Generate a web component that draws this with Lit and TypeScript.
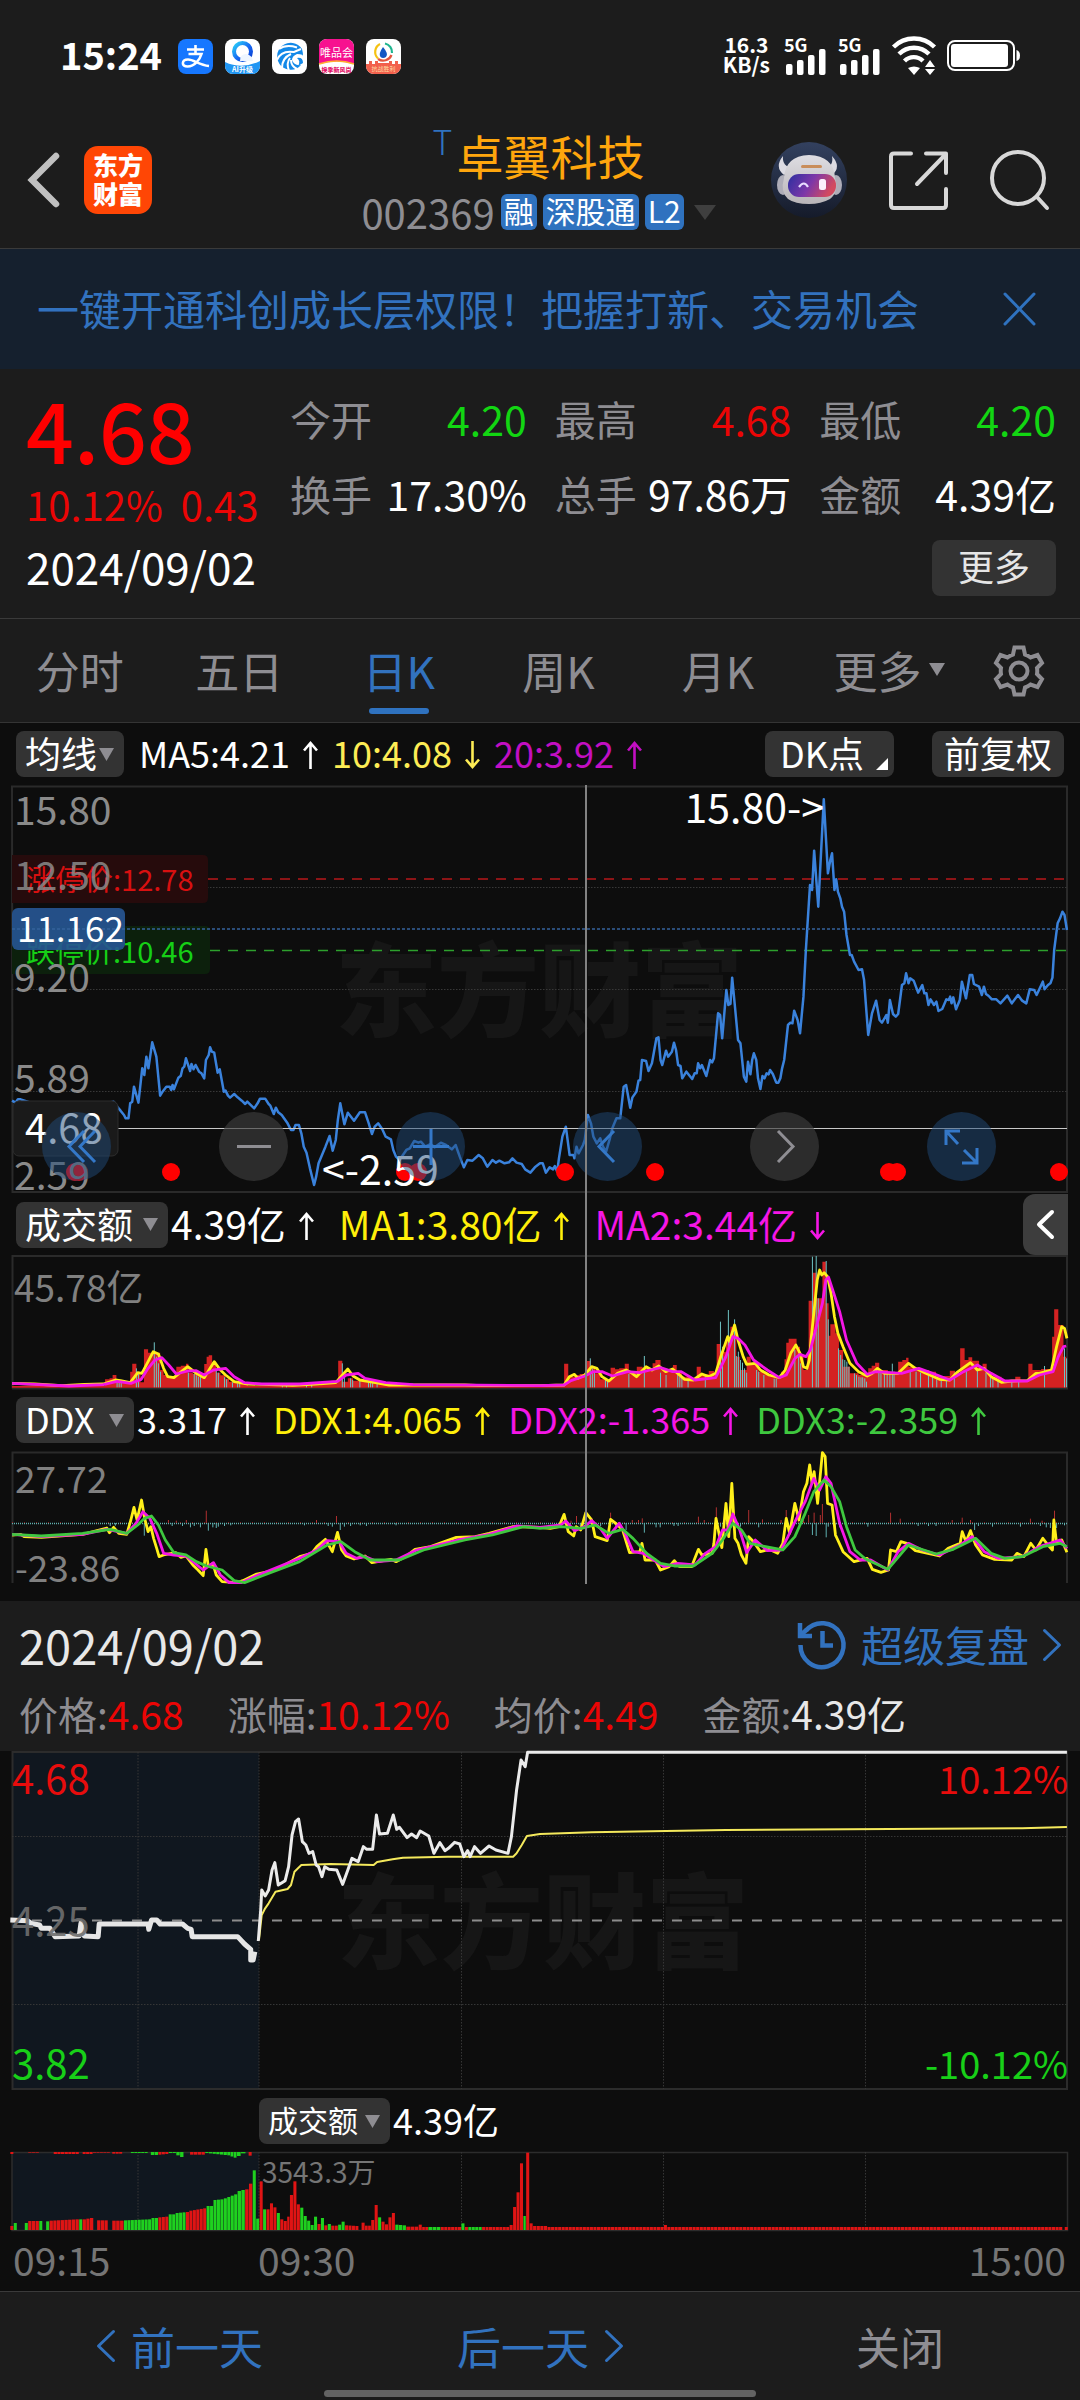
import { LitElement, html, css, svg, nothing } from "lit";
import { customElement, state } from "lit/decorators.js";

type Dir = "up" | "down" | "";
interface Reading { text: string; dir: Dir; tone: string; }
/** A run of equal-width bars: start, end, first top, last top, tone. */
type Run = [number, number, number, number, string];

/* Chart traces are sampled on a fine grid; the right half is stored relative to its own origin. */
const HALF = 1568;
const FINE = "scale(0.34439 0.33333)";

function pts(left: string, right = ""): string {
  const shift = right
    .split(" ")
    .filter(Boolean)
    .map((p) => {
      const [x, y] = p.split(",").map(Number);
      return `${x + HALF},${y}`;
    });
  return [left, ...shift].join(" ");
}

const PRICE = pts(
  "35,1172 45,1178 52,1168 60,1168 100,1182 160,1190 220,1178 280,1186 330,1175 340,1190 350,1202 360,1215 365,1225 373,1225 378,1180 384,1175 389,1130 402,1178 413,1075 419,1095 425,1040 431,1075 442,997 454,1040 465,1157 472,1145 483,1130 493,1130 497,1140 501,1125 505,1138 518,1103 525,1097 530,1075 535,1070 540,1045 552,1083 556,1062 562,1078 568,1065 578,1085 585,1090 593,1105 598,1050 606,1035 610,1012 615,1025 622,1028 632,1088 638,1078 650,1145 655,1142 662,1157 668,1163 680,1152 690,1162 702,1172 712,1182 718,1175 738,1195 748,1180 755,1166 770,1166 780,1182 785,1187 795,1212 801,1193 808,1207 818,1215 835,1240 845,1260 852,1260 858,1245 868,1245 875,1270 882,1310 890,1328 900,1375 912,1425 918,1400 925,1360 935,1335 945,1310 957,1278 966,1322 975,1290 981,1230 988,1180 1000,1243 1010,1208 1028,1232 1045,1207 1060,1207 1070,1238 1080,1272 1088,1250 1098,1240 1110,1258 1120,1280 1135,1288 1142,1320 1150,1340 1160,1350 1180,1320 1190,1315 1203,1293 1215,1298 1222,1295 1235,1310 1250,1302 1262,1312 1280,1298 1295,1305 1312,1318 1323,1305 1335,1340 1347,1372 1357,1350 1372,1352 1390,1335 1402,1345 1415,1370 1430,1350 1440,1358 1450,1352 1465,1360 1478,1357 1488,1345 1500,1358 1515,1362 1525,1378 1540,1388 1553,1372",
  "0,1360 8,1360 17,1388 28,1372 38,1378 43,1368 50,1385 55,1345 65,1280 75,1250 86,1335 97,1335 100,1345 106,1310 112,1330 125,1305 130,1290 139,1215 148,1240 155,1280 165,1300 175,1285 183,1310 192,1325 203,1285 210,1255 222,1225 233,1225 243,1130 250,1125 262,1193 268,1163 280,1145 286,1112 291,1110 296,1050 308,1053 315,1083 325,1060 338,985 344,982 350,1050 355,1065 366,1022 372,1040 383,1025 389,998 395,1020 401,1065 408,1068 413,1105 425,1085 442,1107 449,1090 455,1090 459,1060 465,1075 470,1065 483,1098 494,1050 500,1057 505,1045 517,910 523,915 529,985 541,840 547,885 553,882 558,803 567,900 575,990 582,1000 592,1100 599,1115 604,1055 611,1093 616,1050 621,1030 628,1050 633,1105 640,1137 646,1098 652,1105 658,1090 664,1093 668,1080 676,1092 686,1118 692,1118 698,1105 703,1075 709,1050 720,945 727,938 733,940 738,902 748,930 755,970 765,860 772,720 784,525 790,540 796,422 808,590 824,268 836,490 843,450 848,430 855,540 860,508 865,545 872,565 877,590 883,605 890,675 900,735 905,735 912,755 925,780 935,778 941,810 946,880 953,975 964,910 976,872 986,930 993,938 1006,915 1010,938 1016,870 1025,912 1033,920 1040,912 1051,825 1058,820 1063,790 1070,820 1075,805 1085,812 1098,848 1110,825 1116,850 1122,850 1128,885 1134,868 1144,885 1151,875 1157,903 1168,897 1180,868 1187,870 1191,860 1195,880 1200,862 1208,898 1219,870 1225,815 1237,865 1248,795 1255,795 1260,822 1275,830 1283,855 1289,830 1295,852 1303,858 1312,868 1325,868 1337,880 1357,857 1370,880 1388,855 1400,872 1412,880 1422,838 1435,840 1442,855 1460,815 1465,838 1475,825 1482,820 1488,803 1493,720 1498,680 1503,640 1510,625 1517,605 1523,615 1530,660",
);

const TURN_FAST = pts(
  "35,580 100,582 180,587 245,583 300,582 335,570 350,572 378,578 400,548 412,550 430,515 445,485 460,492 475,535 487,560 505,563 520,550 545,530 570,550 593,563 610,535 622,515 640,540 655,555 680,575 720,582 850,586 920,582 975,578 990,560 1010,537 1025,558 1045,570 1090,578 1130,585 1350,585 1400,587",
  "0,587 70,585 85,560 100,553 110,565 130,555 150,530 165,535 180,560 200,573 225,550 250,540 265,548 280,560 308,530 325,540 345,528 365,545 385,537 400,550 420,568 445,570 470,552 490,560 510,550 525,500 545,440 550,455 565,405 575,450 590,500 600,523 625,520 640,540 665,555 695,563 712,540 728,490 743,465 755,490 765,530 775,535 782,510 788,440 798,340 805,270 812,240 818,255 825,248 835,260 845,310 855,380 865,430 880,470 900,520 925,545 950,558 965,550 980,535 1000,550 1040,550 1070,520 1090,535 1120,550 1160,568 1190,570 1210,548 1250,518 1270,540 1290,535 1310,560 1340,577 1370,573 1415,572 1440,550 1450,550 1485,540 1500,470 1515,410 1523,415 1530,445",
);
const TURN_SLOW = pts(
  "35,580 100,583 200,588 300,584 340,574 380,580 410,568 430,535 450,510 470,503 490,525 512,552 545,543 570,542 593,555 620,540 655,535 680,560 710,578 760,582 870,582 980,574 1005,555 1040,550 1060,565 1120,578 1200,584",
  "0,587 70,585 90,572 130,558 155,545 180,545 210,558 255,545 290,548 320,540 350,533 385,545 410,545 450,570 510,563 540,500 560,440 575,445 595,465 620,510 660,540 695,563 715,555 740,505 755,493 772,500 785,480 800,420 820,340 830,270 838,262 850,300 870,365 890,450 920,520 950,553 975,545 1050,550 1100,535 1140,550 1190,570 1230,545 1270,525 1310,550 1350,573 1415,573 1450,555 1490,545 1505,500 1520,470 1528,468",
);
const TURN_BARS = pts(
  "35,588 305,568 318,565 327,555 338,572 350,575 362,578 378,545 384,521 396,548 408,577 418,478 430,488 445,488 465,540 475,555 490,560 512,530 525,527 540,521 547,548 560,552 575,558 593,522 600,500 606,496 616,517 628,548 640,556 655,566 665,575 690,582 720,587 900,586 930,577 940,575 960,572 982,512 994,575 1010,565 1025,572 1040,570 1060,573 1100,582 1150,588",
  "70,521 82,560 100,555 115,552 130,550 134,513 147,535 160,550 175,568 205,533 218,538 230,535 246,521 258,548 270,545 281,530 298,535 327,520 335,510 350,538 370,540 386,525 397,545 412,560 440,570 455,530 467,553 490,543 505,548 513,462 524,485 540,450 553,410 562,430 570,500 580,540 600,500 612,518 635,545 660,555 690,562 700,545 710,508 715,458 722,446 745,470 755,500 765,540 775,488 780,332 792,248 803,325 820,215 830,340 838,437 843,403 858,430 868,480 880,530 900,550 925,555 953,535 963,527 973,518 985,540 1010,550 1040,515 1052,510 1063,503 1070,530 1090,540 1130,545 1150,558 1190,542 1205,550 1220,475 1233,510 1244,502 1255,512 1275,530 1285,521 1297,545 1310,560 1340,572 1380,560 1395,570 1418,521 1430,540 1455,537 1487,440 1493,358 1505,405 1520,500 1528,592",
);
const TURN_FALLS = pts(
  "340,572 346,575 352,578 396,535 402,550 448,457 454,500 460,520 466,545 547,548 564,552 570,556 576,560 582,556 628,540 634,548 652,562 658,568 675,577 690,580 696,580 820,586 832,586 890,584 905,584 994,520 1000,555 1018,565 1024,570 1045,572 1070,574 1076,574 1082,578 1095,580",
  "146,505 152,535 158,545 190,570 196,572 258,552 303,498 350,548 366,555 400,555 406,560 412,562 430,570 480,560 524,395 530,470 547,360 565,388 570,498 576,485 582,510 588,518 594,535 600,548 629,540 635,545 650,555 680,566 686,566 740,480 751,500 757,520 791,200 802,198 808,325 831,213 837,388 867,475 873,495 879,508 885,510 891,515 897,530 913,550 919,555 926,560 932,562 937,562 943,565 948,575 984,545 990,548 1000,552 1008,552 1016,552 1023,521 1028,545 1075,540 1092,545 1105,548 1128,555 1140,560 1152,568 1165,568 1180,570 1203,548 1238,540 1270,535 1295,548 1308,560 1315,565 1330,572 1370,572 1390,572 1465,528 1523,475 1529,505",
);

const DDX_FAST = pts(
  "35,1035 60,1033 70,1040 120,1042 200,1036 240,1033 310,1014 318,1028 330,1012 345,1030 368,1033 380,990 389,952 398,990 411,930 420,985 430,1025 438,1010 446,1045 455,1075 462,1100 475,1095 510,1088 525,1102 540,1098 560,1125 575,1140 590,1157 598,1078 605,1130 618,1120 628,1155 645,1175 690,1178 705,1172 745,1152 800,1140 870,1100 905,1090 920,1070 945,1048 965,1085 980,1027 992,1080 1005,1098 1028,1107 1060,1098 1080,1118 1135,1108 1150,1115 1180,1098 1205,1078 1250,1070 1325,1042 1380,1040 1420,1030 1490,1010",
  "0,1012 30,1015 55,1010 70,973 82,1025 98,1038 105,1010 118,1020 133,968 150,990 160,1040 195,1052 205,988 220,1000 240,1020 260,1088 290,1085 296,1060 305,1110 335,1110 350,1140 375,1130 390,1112 405,1130 440,1130 460,1078 470,1095 500,1090 505,1060 511,985 528,1073 540,940 548,1040 557,880 566,1045 575,1060 585,1095 598,1120 606,1040 620,1055 640,1085 665,1078 690,1090 705,1060 715,985 725,1030 740,940 752,990 765,905 775,880 783,825 790,880 796,845 806,940 820,788 828,800 835,940 848,945 858,1035 880,1085 912,1115 950,1105 965,1138 990,1147 1012,1140 1018,1080 1035,1085 1048,1055 1065,1060 1090,1082 1160,1098 1185,1075 1220,1060 1226,1025 1237,1055 1250,1022 1265,1065 1285,1095 1320,1108 1370,1110 1385,1090 1405,1100 1425,1060 1440,1080 1460,1045 1475,1065 1488,1080 1492,990 1500,1060 1515,1050 1530,1087",
);
const DDX_MID = pts(
  "35,1033 120,1040 240,1033 310,1018 368,1030 395,1000 415,965 435,985 455,1030 475,1090 505,1095 540,1098 590,1140 620,1118 640,1155 665,1178 700,1178 750,1155 870,1105 920,1080 950,1052 985,1055 1005,1090 1035,1105 1060,1100 1095,1115 1150,1110 1210,1080 1330,1050 1420,1033 1500,1008",
  "0,1012 60,1005 75,993 100,1022 130,1010 150,992 175,1015 195,1045 230,1000 245,1025 270,1085 300,1090 330,1110 360,1130 400,1120 450,1125 480,1090 510,1070 530,1020 545,1020 560,972 580,1020 600,1088 625,1050 660,1082 700,1080 720,1040 745,985 770,935 795,865 812,900 830,860 845,880 870,1000 900,1085 930,1110 960,1110 1010,1140 1040,1085 1070,1060 1110,1080 1160,1095 1220,1065 1255,1040 1290,1085 1330,1105 1400,1100 1450,1070 1510,1050 1530,1075",
);
const DDX_SLOW = pts(
  "35,1033 120,1038 240,1030 320,1018 368,1030 400,1005 420,985 440,978 460,1005 480,1050 505,1088 540,1095 570,1115 600,1128 645,1140 680,1172 710,1178 760,1158 870,1115 950,1065 990,1055 1030,1085 1075,1110 1160,1110 1230,1080 1350,1050 1430,1035 1520,1010",
  "0,1015 60,1010 120,1015 160,1005 200,1030 240,1018 270,1045 310,1090 350,1120 390,1128 445,1128 500,1090 530,1050 560,1000 585,1020 610,1060 655,1070 705,1080 740,1040 770,970 795,905 825,870 845,890 870,935 890,1010 915,1080 945,1107 1010,1138 1070,1065 1150,1092 1200,1078 1265,1045 1310,1090 1350,1105 1400,1100 1460,1070 1510,1060 1530,1070",
);
const DDX_TICKS = pts(
  "320,1008 335,1007 419,1037 489,990 500,1008 512,992 530,1008 541,990 553,1012 564,1008 582,1012 599,962 605,1022 618,1012 628,1014 634,1010 652,1008 670,1006 884,1006 919,990 953,1008 965,1010 977,978 988,1020 1000,1010 1018,1008 1046,1006 1064,1008 1150,1006",
  "90,992 106,978 117,1008 176,1008 205,968 220,1012 250,1020 268,990 286,990 297,985 303,1028 337,1012 349,1012 389,1008 401,1008 460,980 477,990 512,952 524,1010 547,1040 560,984 582,1010 606,960 635,1012 646,988 700,990 715,960 733,1012 750,985 765,990 780,975 791,1035 796,968 802,1038 814,975 820,942 831,1042 837,1010 857,1040 870,1012 952,1010 1018,968 1046,986 1098,1008 1128,1008 1150,1008 1197,990 1226,983 1250,990 1262,1020 1273,1008 1314,1010 1395,1010 1424,986 1453,1008 1458,992 1470,1012 1482,1014 1494,962 1500,1014 1523,1006",
);

const PRE_OPEN =
  "30,990 80,992 90,1000 115,1005 120,1015 145,1015 160,1040 230,1038 235,1000 245,1038 285,1040 288,1002 430,1002 432,1018 440,990 455,990 465,1002 530,1002 545,1015 555,1018 558,1040 690,1040 710,1062 728,1078 728,1110 735,1110 740,1085";
const INTRADAY = pts(
  "750,1053 757,960 760,900 770,918 780,900 790,840 798,818 808,885 828,872 838,830 848,735 858,695 867,687 878,755 888,765 897,790 908,785 918,825 925,830 935,860 943,830 955,838 978,840 995,883 1010,840 1022,805 1040,815 1055,770 1065,778 1082,778 1093,675 1102,732 1125,730 1142,675 1152,718 1160,712 1182,743 1195,732 1210,743 1220,723 1245,738 1260,790 1277,758 1292,782 1302,775 1320,757 1335,762 1347,800 1358,782 1365,800 1378,770 1395,790 1420,768 1440,780 1475,790 1485,740 1500,600 1513,510 1525,530 1532,487",
  "0,487 1530,487",
);
const AVERAGE = pts(
  "752,1050 760,975 770,955 780,940 800,905 835,897 845,885 855,845 875,825 960,822 1085,825 1095,816 1140,808 1170,803 1300,800 1490,800 1500,790 1515,765 1530,738",
  "0,732 150,727 540,720 1400,715 1530,711",
);

const R = "#e01414";
const G = "#1fd11f";
const VOLUME: Run[] = [
  [15, 20, 438, 438, R], [20, 25, 429, 429, G], [36, 41, 429, 429, G], [41, 57, 423, 423, R], [57, 62, 423, 423, G],
  [67, 72, 424, 424, G], [72, 115, 422, 418, R], [115, 120, 418, 418, G], [120, 136, 418, 414, R], [141, 157, 421, 421, R],
  [163, 180, 422, 422, R], [180, 220, 421, 418, G], [220, 230, 414, 414, G], [230, 245, 412, 410, R], [245, 255, 403, 403, G],
  [255, 270, 399, 397, G], [270, 275, 396, 396, R], [275, 300, 392, 385, R], [300, 310, 378, 378, G], [310, 325, 360, 358, G],
  [325, 345, 355, 343, G], [345, 356, 333, 330, G], [356, 367, 328, 311, R], [367, 372, 271, 271, G], [372, 377, 416, 416, G],
  [377, 382, 304, 304, R], [382, 387, 388, 388, G], [387, 392, 388, 388, R], [392, 397, 370, 370, R], [397, 402, 382, 382, R],
  [402, 407, 399, 399, G], [407, 412, 418, 418, R], [412, 417, 423, 423, R], [417, 421, 410, 410, R], [421, 426, 345, 345, R],
  [426, 431, 304, 304, R], [431, 436, 373, 373, R], [436, 441, 383, 383, G], [441, 446, 408, 408, G], [446, 451, 422, 422, G],
  [451, 456, 435, 435, G], [456, 461, 410, 410, G], [461, 466, 432, 432, R], [466, 471, 414, 414, G], [471, 476, 436, 436, R],
  [476, 481, 432, 432, G], [481, 491, 437, 437, R], [491, 496, 434, 434, G], [496, 501, 425, 425, G], [501, 521, 436, 438, R],
  [525, 530, 428, 428, R], [530, 539, 437, 437, R], [539, 544, 420, 420, R], [544, 549, 375, 375, R], [549, 554, 412, 412, G],
  [554, 559, 425, 425, R], [559, 564, 433, 433, R], [564, 569, 412, 412, R], [569, 574, 399, 399, R], [574, 590, 434, 436, G],
  [590, 608, 440, 440, R], [608, 613, 434, 434, R], [613, 622, 441, 441, R], [622, 640, 441, 441, G], [640, 670, 441, 441, R],
  [670, 675, 430, 430, G], [675, 680, 441, 441, R], [680, 700, 441, 441, G], [700, 740, 441, 441, R], [740, 745, 435, 435, R],
  [745, 750, 381, 381, R], [750, 755, 337, 337, R], [755, 760, 250, 250, R], [760, 764, 408, 408, G], [764, 769, 218, 218, R],
  [769, 774, 430, 430, R], [774, 795, 438, 438, R], [795, 964, 441, 441, R], [964, 969, 435, 435, R], [969, 1543, 441, 441, R],
  [1546, 1551, 441, 441, R],
];
const UNMATCHED: Run[] = [
  [15, 20, 222, 222, R], [41, 57, 218, 218, R], [78, 115, 222, 222, R], [120, 135, 222, 222, R], [135, 160, 218, 218, R],
  [163, 178, 221, 221, R], [190, 215, 219, 219, G], [219, 230, 225, 225, G], [230, 245, 224, 222, R], [245, 256, 219, 219, G],
  [256, 267, 226, 231, G], [276, 298, 224, 224, R], [298, 330, 219, 225, G], [330, 344, 226, 233, G], [344, 350, 228, 228, G],
  [350, 357, 220, 220, G], [361, 366, 227, 227, R],
];

function runs(list: Run[], base: number, hanging = false) {
  return list.map(([from, to, first, last, tone]) => {
    const count = Math.max(1, Math.round((to - from) / 5.2));
    const step = (to - from) / count;
    return Array.from({ length: count }, (_, i) => {
      const top = count > 1 ? first + ((last - first) * i) / (count - 1) : first;
      return svg`<rect x=${from + i * step} y=${hanging ? base : top} width=${step - 0.6} height=${Math.abs(base - top)} fill=${tone}></rect>`;
    });
  });
}

function pairs(trace: string): number[][] {
  return trace.split(" ").map((p) => p.split(",").map(Number));
}

/** Turns step samples into one closed area that stands on the base line. */
function steps(trace: string, base: number): string {
  const list = pairs(trace);
  let d = `M${list[0][0]} ${base}`;
  list.forEach(([x, y], i) => {
    const next = list[i + 1] ? list[i + 1][0] : x;
    d += `V${y}H${next}`;
  });
  return `${d}V${base}Z`;
}

function stems(trace: string, base: number): string {
  return pairs(trace).map(([x, y]) => `M${x} ${base}V${y}`).join("");
}

const STATS = [
  { label: "今开", value: "4.20", tone: "green" },
  { label: "最高", value: "4.68", tone: "red" },
  { label: "最低", value: "4.20", tone: "green" },
  { label: "换手", value: "17.30%", tone: "white" },
  { label: "总手", value: "97.86万", tone: "white" },
  { label: "金额", value: "4.39亿", tone: "white" },
];
const TABS = ["分时", "五日", "日K", "周K", "月K"];
const MA: Reading[] = [
  { text: "MA5:4.21", dir: "up", tone: "white" },
  { text: "10:4.08", dir: "down", tone: "lemon" },
  { text: "20:3.92", dir: "up", tone: "purple" },
];
const TURNOVER: Reading[] = [
  { text: "4.39亿", dir: "up", tone: "white" },
  { text: "MA1:3.80亿", dir: "up", tone: "yellow" },
  { text: "MA2:3.44亿", dir: "down", tone: "magenta" },
];
const DDX: Reading[] = [
  { text: "3.317", dir: "up", tone: "white" },
  { text: "DDX1:4.065", dir: "up", tone: "yellow" },
  { text: "DDX2:-1.365", dir: "up", tone: "magenta" },
  { text: "DDX3:-2.359", dir: "up", tone: "leaf" },
];
const DAY = [
  { label: "价格:", value: "4.68", tone: "red" },
  { label: "涨幅:", value: "10.12%", tone: "red" },
  { label: "均价:", value: "4.49", tone: "red" },
  { label: "金额:", value: "4.39亿", tone: "pale" },
];

@customElement("app-root")
export class AppRoot extends LitElement {
  @state() private tab = "日K";
  @state() private banner = true;

  static styles = css`
    :host {
      display: block;
      min-height: 100vh;
      background: #0d0d0d;
      color: #fff;
      font-family: "Noto Sans CJK SC", "Noto Sans", sans-serif;
      font-size: 40px;
      line-height: 1;
    }
    * { box-sizing: border-box; }
    button, select {
      font: inherit;
      color: inherit;
      background: none;
      border: 0;
      padding: 0;
      margin: 0;
      appearance: none;
      cursor: pointer;
    }
    a { color: inherit; text-decoration: none; }
    svg { display: block; flex: none; overflow: visible; }
    h1, h2, p, dl, dd, dt { margin: 0; font-weight: 400; }
    .white { color: #fff; }
    .pale { color: #e8e8e8; }
    .red { color: #eb0505; }
    .green { color: #12d612; }
    .lemon { color: #fdec55; }
    .yellow { color: #ffef0a; }
    .purple { color: #c20fc2; }
    .magenta { color: #f516e6; }
    .leaf { color: #3fc83f; }

    .status {
      height: 112px;
      padding: 0 60px;
      display: flex;
      align-items: center;
      justify-content: space-between;
      background: #1c1c1c;
    }
    .status-side { display: flex; align-items: center; }
    .clock { font-size: 38px; font-weight: 700; line-height: 44px; margin-right: 16px; padding-bottom: 4px; }
    .apps { display: flex; gap: 12px; }
    .net { gap: 11px; }
    .speed { font-size: 21px; font-weight: 700; line-height: 20px; padding-bottom: 4px; margin-right: 3px; text-align: center; }

    .header {
      min-height: 137px;
      display: grid;
      grid-template-columns: 1fr auto 1fr;
      align-items: center;
      padding: 0 30px 0 27px;
      background: #1c1c1c;
      border-bottom: 1px solid #3a3a3a;
    }
    .head-left { display: flex; align-items: center; gap: 24px; }
    .logo {
      width: 68px;
      height: 68px;
      border-radius: 14px;
      background: #ff4605;
      font-size: 25px;
      line-height: 29px;
      font-weight: 900;
      display: grid;
      place-content: center;
      padding-bottom: 3px;
    }
    .head-mid { display: flex; flex-direction: column; align-items: center; gap: 14px; }
    .name { display: flex; font-size: 47px; line-height: 50px; color: #ffa60d; }
    .name sup { font-size: 34px; line-height: 22px; padding-right: 4px; color: #2f72bf; font-weight: 300; }
    .code { display: flex; align-items: center; gap: 6px; font-size: 40px; line-height: 36px; color: #8e8d92; }
    .badge { font-size: 30px; line-height: 32px; height: 36px; padding: 0 3px; border-radius: 6px; background: #2f72bf; color: #fff; }
    .caret-wrap { padding-left: 4px; }
    .head-right { display: flex; align-items: center; justify-content: flex-end; gap: 42px; }

    .banner {
      height: 120px;
      display: flex;
      align-items: center;
      justify-content: space-between;
      padding: 0 44px 0 37px;
      background: #15202e;
      color: #3272bf;
      font-size: 42px;
      line-height: 60px;
    }
    .banner a { padding-bottom: 2px; }

    .quote {
      display: grid;
      grid-template-columns: minmax(236px, auto) 1fr;
      column-gap: 28px;
      padding: 22px 24px 22px 26px;
      background: #1c1c1c;
      border-bottom: 1px solid #3a3a3a;
    }
    .last { font-size: 84px; line-height: 74px; font-weight: 500; color: #f00; }
    .change { display: flex; gap: 18px; line-height: 50px; margin-top: 14px; }
    .stats { display: grid; grid-template-columns: repeat(3, 1fr); column-gap: 28px; row-gap: 20px; align-content: start; }
    .stat { display: flex; align-items: center; justify-content: space-between; line-height: 55px; font-size: 41px; }
    .stat dt { color: #8e8d92; }
    .date { font-size: 44px; line-height: 60px; align-self: center; padding-top: 7px; }
    .more {
      justify-self: end;
      align-self: end;
      width: 124px;
      height: 56px;
      border-radius: 8px;
      background: #333;
      color: #e6e6e6;
      font-size: 36px;
      line-height: 50px;
      padding-bottom: 6px;
    }

    .tabs {
      display: grid;
      grid-template-columns: repeat(6, 13fr) 10fr;
      height: 104px;
      background: #1c1c1c;
      border-bottom: 1px solid #343434;
      color: #8e8d92;
    }
    .tab { position: relative; font-size: 44px; line-height: 60px; padding-bottom: 2px; }
    .tab.on { color: #3272bf; }
    .tab.on::after {
      content: "";
      position: absolute;
      left: calc(50% - 30px);
      bottom: 8px;
      width: 60px;
      height: 6px;
      border-radius: 3px;
      background: #2f72bf;
    }
    .tab svg { position: absolute; right: 12px; top: 44px; }
    .gear { display: grid; place-items: center; }

    .legend { display: flex; align-items: center; height: 62px; padding: 0 12px 0 16px; font-size: 36px; line-height: 46px; }
    .pick { position: relative; display: flex; align-items: center; }
    .pick select {
      height: 46px;
      padding: 0 34px 4px 9px;
      border-radius: 8px;
      background: #333;
      font-size: 36px;
      line-height: 42px;
      color: #fff;
    }
    .pick.tight select { padding-right: 26px; }
    .pick.loose select { padding-right: 39px; }
    .pick.small select { font-size: 30px; padding-right: 32px; }
    .pick svg { position: absolute; right: 10px; pointer-events: none; }
    .readings { display: flex; align-items: center; padding-bottom: 4px; }
    .reading { display: flex; align-items: center; gap: 13px; }
    .reading svg { position: relative; top: 3px; }
    .readings.ma { gap: 14px; margin-left: 15px; }
    .readings.turn { gap: 25px; margin-left: 3px; font-size: 39px; }
    .readings.ddx { gap: 18px; margin-left: 3px; }
    .tools { margin-left: auto; display: flex; gap: 38px; padding-right: 4px; }
    .tool { height: 46px; border-radius: 8px; background: #333; line-height: 42px; padding: 0 12px 4px; }
    .tool.dk { position: relative; padding: 0 30px 4px 15px; }
    .tool.dk::after {
      content: "";
      position: absolute;
      right: 6px;
      bottom: 7px;
      border-left: 12px solid transparent;
      border-bottom: 12px solid #fff;
    }
    .fold {
      margin-left: auto;
      width: 45px;
      height: 61px;
      border-radius: 12px 0 0 12px;
      background: #3d3d3d;
      display: grid;
      place-items: center;
    }
    .plots { position: relative; }
    .plots .amount { height: 61px; }
    .cross { position: absolute; left: 54.2%; top: 0; bottom: 0; width: 2px; background: #828282; pointer-events: none; }
    .chart { position: relative; }
    .chart > svg { width: 100%; height: auto; }
    .round {
      position: absolute;
      left: 42px;
      right: 84px;
      bottom: 13px;
      display: flex;
      justify-content: space-between;
    }
    .round button { width: 69px; height: 69px; border-radius: 50%; background: rgba(60, 60, 60, 0.66); display: grid; place-items: center; }
    .round .blue { background: rgba(32, 74, 120, 0.5); }
    .line { fill: none; stroke-linejoin: round; vector-effect: non-scaling-stroke; }
    .crisp { shape-rendering: crispEdges; }
    .axis { fill: #8a8a8a; font-size: 39px; }

    .day { background: #1c1c1c; padding: 14px 19px 10px; margin-top: 17px; }
    .day-head { display: flex; justify-content: space-between; align-items: center; }
    .day-head h2 { font-size: 47px; line-height: 60px; color: #e8e8e8; }
    .replay { display: flex; align-items: center; color: #3272bf; font-size: 42px; line-height: 56px; }
    .replay span { padding: 0 14px 2px 15px; }
    .day dl { display: flex; gap: 44px; margin-top: 10px; font-size: 39px; line-height: 56px; }
    .day dl div { display: flex; }
    .day dt { color: #8e8d92; }

    .sub { padding-left: 259px; height: 60px; }
    .times { display: grid; grid-template-columns: 245px 1fr auto; padding: 5px 14px 10px 13px; font-size: 39px; line-height: 44px; color: #757575; }
    .foot {
      height: 109px;
      display: grid;
      grid-template-columns: repeat(3, 1fr);
      position: relative;
      background: #1c1c1c;
      border-top: 1px solid #3a3a3a;
      color: #3272bf;
    }
    .foot button { display: flex; align-items: center; justify-content: center; gap: 16px; font-size: 44px; line-height: 60px; }
    .foot .close { color: #8e8d92; }
    .home { position: absolute; left: 30%; right: 30%; bottom: 3px; height: 7px; border-radius: 4px; background: #636363; }
  `;

  private arrow(dir: Dir) {
    return dir
      ? html`<svg width="15" height="28" viewBox="0 0 15 28" fill="none" stroke="currentColor" stroke-width="2.6" aria-hidden="true">
          ${dir === "up" ? svg`<path d="M7.5 28V2M1 9.5L7.5 2L14 9.5"></path>` : svg`<path d="M7.5 0V26M1 18.5L7.5 26L14 18.5"></path>`}
        </svg>`
      : nothing;
  }

  private readings(list: Reading[], kind: string) {
    return html`<div class="readings ${kind}">
      ${list.map((r) => html`<span class="reading ${r.tone}">${r.text}${this.arrow(r.dir)}</span>`)}
    </div>`;
  }

  private pick(name: string, kind = "") {
    return html`<label class="pick ${kind}">
      <select aria-label=${name}><option>${name}</option></select>
      <svg width="15" height="13" viewBox="0 0 15 13" aria-hidden="true"><path d="M0 0H15L7.5 13Z" fill="#8e8d92"></path></svg>
    </label>`;
  }

  private chevron(w: number, h: number, right: boolean, stroke: number, color = "currentColor") {
    const m = stroke / 2;
    const d = right ? `M${m} ${m}L${w - m} ${h / 2}L${m} ${h - m}` : `M${w - m} ${m}L${m} ${h / 2}L${w - m} ${h - m}`;
    return html`<svg width=${w} height=${h} viewBox="0 0 ${w} ${h}" fill="none" stroke=${color} stroke-width=${stroke} stroke-linecap="round" stroke-linejoin="round" aria-hidden="true"><path d=${d}></path></svg>`;
  }

  private signal() {
    return html`<svg width="43" height="38" viewBox="0 0 43 38" fill="#fff" aria-label="5G">
      <text x="0" y="15" font-size="18" font-weight="700">5G</text>
      <rect x="2" y="27" width="6.500" height="11" rx="2"></rect>
      <rect x="13" y="23" width="6.500" height="15" rx="2"></rect>
      <rect x="24" y="18" width="6.500" height="20" rx="2"></rect>
      <rect x="35" y="12" width="6.500" height="26" rx="2"></rect>
    </svg>`;
  }

  private renderStatus() {
    return html`<div class="status">
      <div class="status-side">
        <span class="clock">15:24</span>
        <div class="apps">
          <svg width="35" height="35" viewBox="0 0 35 35" aria-hidden="true">
            <rect width="35" height="35" rx="8" fill="#1677ff"></rect>
            <path d="M9 10.500H26M17.500 6V15M10.500 15H23.500C22 20 17 27.500 9.500 27.500C3 27.500 3.500 20.500 10 20.500C16 20.500 21 26 31 27" fill="none" stroke="#fff" stroke-width="2.600"></path>
          </svg>
          <svg width="35" height="35" viewBox="0 0 35 35" aria-hidden="true">
            <defs>
              <linearGradient id="ring" x1="0" y1="0" x2="1" y2="1"><stop offset="0" stop-color="#2ad0f8"></stop><stop offset=".55" stop-color="#1667f2"></stop><stop offset="1" stop-color="#0b3fd0"></stop></linearGradient>
            </defs>
            <rect width="35" height="35" rx="8" fill="#fff"></rect>
            <path d="M0 23Q17 31 35 22V27A8 8 0 0 1 27 35H8A8 8 0 0 1 0 27Z" fill="#2196f3"></path>
            <circle cx="17.500" cy="12.500" r="8.500" fill="none" stroke="url(#ring)" stroke-width="4"></circle>
            <path d="M15 22Q15 15 21 15Q27 16 28 22Z" fill="#eef6ff"></path>
            <text x="17.500" y="33" font-size="7" font-weight="700" fill="#fff" text-anchor="middle">AI升级</text>
          </svg>
          <svg width="35" height="35" viewBox="0 0 35 35" aria-hidden="true">
            <rect width="35" height="35" rx="8" fill="#fff"></rect>
            <path d="M30 10A13.500 13.500 0 1 0 29 26Q22 27 20 21Q20 17 25 15Q32 15 31 18Q31 13 30 10Z" fill="#1389e8"></path>
            <g fill="none" stroke="#fff" stroke-width="2">
              <path d="M7 10Q14 5 25 8.500"></path>
              <path d="M5 21Q9 11 22 13L29 10"></path>
              <path d="M10 29Q10 19 19 15"></path>
              <path d="M17 32Q14 24 18 19"></path>
              <path d="M25 30Q19 27 19 21"></path>
            </g>
            <path d="M25 19Q31 18 31 24L26 27Q29 22 25 19Z" fill="#1389e8"></path>
          </svg>
          <svg width="35" height="35" viewBox="0 0 35 35" aria-hidden="true">
            <rect width="35" height="35" rx="8" fill="#fff"></rect>
            <path d="M8 0H27A8 8 0 0 1 35 8V25Q18 20 0 25V8A8 8 0 0 1 8 0Z" fill="#f7118f"></path>
            <path d="M0 25Q18 19 35 25" fill="none" stroke="#ffb02e" stroke-width="1.500"></path>
            <text x="17.500" y="18" font-size="11" fill="#fff" text-anchor="middle">唯品会</text>
            <text x="17.500" y="33" font-size="6" font-weight="900" fill="#e3176b" text-anchor="middle">换季新风尚</text>
          </svg>
          <svg width="35" height="35" viewBox="0 0 35 35" aria-hidden="true">
            <rect width="35" height="35" rx="8" fill="#fff"></rect>
            <path d="M0 25H3V22H6V25H9V22H12V24H23V22H26V25H29V22H32V25H35V27A8 8 0 0 1 27 35H8A8 8 0 0 1 0 27Z" fill="#f2604c"></path>
            <g fill="none" stroke-width="2.200">
              <path d="M12 19.500A9 9 0 0 1 14 5" stroke="#f5c211"></path>
              <path d="M19 4.500A9 9 0 0 1 26 14" stroke="#1fb58f"></path>
              <path d="M25.500 16A9 9 0 0 1 12 20" stroke="#e3563f"></path>
            </g>
            <path d="M17 8Q23 15 20 18Q17 20 14.500 18Q12 15 17 8Z" fill="#1358c4"></path>
            <text x="17.500" y="32" font-size="6" fill="#ffd9a0" text-anchor="middle">抗战胜利</text>
          </svg>
        </div>
      </div>
      <div class="status-side net">
        <div class="speed">16.3<br />KB/s</div>
        ${this.signal()} ${this.signal()}
        <svg width="44" height="38" viewBox="0 0 44 38" aria-hidden="true">
          <g fill="none" stroke="#fff" stroke-width="4.400">
            <path d="M1.500 10A29 29 0 0 1 42.500 10"></path>
            <path d="M7 17A21 21 0 0 1 37 17"></path>
            <path d="M12.500 24A13 13 0 0 1 31 24"></path>
          </g>
          <path d="M16 31Q22 28 28 31L22 38Z" fill="#fff"></path>
          <path d="M38 23L43 30H33ZM38 38L33 32H43Z" fill="#fff"></path>
        </svg>
        <svg width="73" height="32" viewBox="0 0 73 32" aria-hidden="true">
          <rect x="1" y="1" width="66" height="29" rx="7" fill="none" stroke="#fff" stroke-width="2"></rect>
          <rect x="4" y="4" width="57" height="23" rx="3" fill="#fff"></rect>
          <path d="M69.500 10Q73 11 73 15.500Q73 20 69.500 21Z" fill="#fff"></path>
        </svg>
      </div>
    </div>`;
  }

  private renderHeader() {
    return html`<header class="header">
      <div class="head-left">
        <button aria-label="返回">
          <svg width="33" height="56" viewBox="0 0 33 56" fill="none" stroke="#c0c0c0" stroke-width="6.500" stroke-linecap="round" stroke-linejoin="miter" aria-hidden="true"><path d="M29 4L5 28L29 52"></path></svg>
        </button>
        <a class="logo" href="#home"><span>东方</span><span>财富</span></a>
      </div>
      <div class="head-mid">
        <h1 class="name"><sup>T</sup>卓翼科技</h1>
        <div class="code">
          <span>002369</span><span class="badge">融</span><span class="badge">深股通</span><span class="badge">L2</span>
          <span class="caret-wrap"><svg width="22" height="15" viewBox="0 0 22 15" aria-hidden="true"><path d="M0 0H22L11 15Z" fill="#3f3f3f"></path></svg></span>
        </div>
      </div>
      <div class="head-right">
        <button aria-label="智能助手">
          <svg width="76" height="76" viewBox="0 0 76 76" aria-hidden="true">
            <defs>
              <linearGradient id="sky" x1="0" y1="0" x2="0" y2="1"><stop offset="0" stop-color="#33415f"></stop><stop offset="1" stop-color="#151b2a"></stop></linearGradient>
              <linearGradient id="visor" x1="0" y1="0" x2="1" y2="0.300"><stop offset="0" stop-color="#2b2fa0"></stop><stop offset=".55" stop-color="#7d37a8"></stop><stop offset="1" stop-color="#d24a60"></stop></linearGradient>
              <linearGradient id="shell" x1="0" y1="0" x2="0" y2="1"><stop offset="0" stop-color="#dedde2"></stop><stop offset="1" stop-color="#b9b5b8"></stop></linearGradient>
            </defs>
            <circle cx="38" cy="38" r="38" fill="url(#sky)"></circle>
            <path d="M12 14Q3 25 13 33L22 26Q11 25 12 14ZM61 14Q71 25 61 33L53 26Q63 25 61 14Z" fill="#dcdbe2"></path>
            <ellipse cx="12" cy="43" rx="6" ry="10" fill="#aeadb8"></ellipse>
            <ellipse cx="65" cy="43" rx="6" ry="10" fill="#aeadb8"></ellipse>
            <path d="M13 36Q14 14 38 13Q63 14 64 36Q68 50 59 57Q50 62 38 62Q24 62 17 57Q9 50 13 36Z" fill="url(#shell)"></path>
            <rect x="17" y="32" width="48" height="23" rx="11" fill="url(#visor)"></rect>
            <rect x="30" y="23" width="21" height="3" rx="1.500" fill="#c98d5a"></rect>
            <path d="M28 45Q33 38 37 45" fill="none" stroke="#e9dcff" stroke-width="2.200"></path>
            <rect x="48" y="37" width="7" height="11" rx="2.500" fill="#fbeffc"></rect>
          </svg>
        </button>
        <button aria-label="分享">
          <svg width="59" height="59" viewBox="0 0 59 59" fill="none" stroke="#d8d8d8" stroke-width="4" stroke-linecap="round" stroke-linejoin="round" aria-hidden="true">
            <path d="M22 2.500H5Q2 2.500 2 5.500V54Q2 57 5 57H54Q57 57 57 54V38M37 2.500H57V22M56 4L28 33"></path>
          </svg>
        </button>
        <button aria-label="搜索">
          <svg width="60" height="60" viewBox="0 0 60 60" fill="none" stroke="#d8d8d8" stroke-width="4" stroke-linecap="round" aria-hidden="true">
            <circle cx="28" cy="28" r="26"></circle><path d="M47 47L57 58"></path>
          </svg>
        </button>
      </div>
    </header>`;
  }

  private renderKline() {
    const buttons: [string, string, unknown][] = [
      ["blue", "快速后退", svg`<path d="M25 2L10 17.500L25 33M36 2L21 17.500L36 33"></path>`],
      ["", "缩小", svg`<path d="M1 17.500H35"></path>`],
      ["blue", "放大", svg`<path d="M0 17.500H36M18 0V36"></path>`],
      ["blue", "前移", svg`<path d="M24 2L9 17.500L24 33"></path>`],
      ["", "后移", svg`<path d="M11 2L26 17.500L11 33"></path>`],
      ["blue", "全屏", svg`<path d="M2 16V2H16M2 2L14 15M20 21L33 34M33 19V34H18"></path>`],
    ];
    return html`<div class="chart">
      <svg viewBox="0 785 1080 409" role="img" aria-label="日K走势">
        <g fill="none" stroke="#2a2a2a" stroke-width="2"><path d="M12 786.500H1067V1192H12.500Z"></path></g>
        <text x="335" y="1029" font-size="102" font-weight="900" fill="#161616">东方财富</text>
        <g stroke="#383838" stroke-dasharray="1.500 1.500"><path d="M12 887.500H1067M12 989.500H1067M12 1091.500H1067"></path></g>
        <path d="M208 879H1067" stroke="#8c1416" stroke-width="2" stroke-dasharray="10 8"></path>
        <path d="M210 950.500H1067" stroke="#2da02d" stroke-width="1.500" stroke-dasharray="10 8"></path>
        <polyline class="line" transform="translate(0 710) ${FINE}" points=${PRICE} stroke="#3a82dc" stroke-width="2.500"></polyline>
        <path d="M118 1128.500H1067" stroke="#c8c8c8" stroke-width="1.200"></path>
        <g fill="#f00">
          ${[75, 79, 171, 405, 418, 565, 655, 889, 897, 1059].map((x) => svg`<circle cx=${x} cy="1172" r="9"></circle>`)}
        </g>
        <path d="M12 855H203Q208 855 208 860V898Q208 903 203 903H12Z" fill="#260b0c"></path>
        <path d="M12 926H205Q210 926 210 931V969Q210 974 205 974H12Z" fill="#0c200c"></path>
        <text x="26" y="891" font-size="29" fill="#d81010">涨停价:12.78</text>
        <text x="26" y="963" font-size="29" fill="#16cf16">跌停价:10.46</text>
        <rect x="12" y="908" width="113" height="42" rx="6" fill="#265591" fill-opacity="0.920"></rect>
        <path d="M12 929H1067" stroke="#35619c" stroke-width="1.600" stroke-dasharray="3 2"></path>
        <text x="17" y="942" font-size="35" fill="#fff">11.162</text>
        <g class="axis">
          <text x="14" y="825">15.80</text>
          <text x="14" y="890" opacity="0.850">12.50</text>
          <text x="14" y="992">9.20</text>
          <text x="14" y="1093">5.89</text>
          <text x="14" y="1190">2.59</text>
        </g>
        <rect x="13" y="1101" width="105" height="55" rx="6" fill="#1a1a1a" stroke="#2d2d2d"></rect>
        <text x="25" y="1143" font-size="40" fill="#fff">4.68</text>
        <text x="322" y="1185" font-size="41" fill="#fff">&lt;-2.59</text>
        <text x="824" y="823" font-size="41" fill="#fff" text-anchor="end">15.80-&gt;</text>
      </svg>
      <div class="round">
        ${buttons.map(
          ([tone, name, icon]) => html`<button class=${tone} aria-label=${name}>
            <svg width="36" height="36" viewBox="0 0 36 36" fill="none" stroke=${tone ? "#3478c8" : "#8f8e93"} stroke-width="3" aria-hidden="true">${icon}</svg>
          </button>`,
        )}
      </div>
    </div>`;
  }

  private renderTurnover() {
    return html`<div class="chart">
      <svg viewBox="0 1255 1080 134" role="img" aria-label="成交额走势">
        <path d="M12.500 1388.500V1256H1067V1388.500H12" fill="none" stroke="#2a2a2a" stroke-width="2"></path>
        <text x="14" y="1302" font-size="37" fill="#808080">45.78亿</text>
        <g transform="translate(0 1190) ${FINE}">
          <path d=${steps(TURN_BARS, 593)} fill="#d42222"></path>
          <path class="line crisp" d=${stems(TURN_FALLS, 592)} stroke="#6fc4c4" stroke-width="1"></path>
          <polyline class="line" points=${TURN_FAST} stroke="#ffef1a" stroke-width="2.800"></polyline>
          <polyline class="line" points=${TURN_SLOW} stroke="#f516e6" stroke-width="2.800"></polyline>
        </g>
      </svg>
    </div>`;
  }

  private renderDdx() {
    const ticks = pairs(DDX_TICKS);
    const stem = (up: boolean) => ticks.filter(([, y]) => y < 999 === up).map(([x, y]) => `M${x} 999V${y}`).join("");
    return html`<div class="chart">
      <svg viewBox="0 1451 1080 133" role="img" aria-label="DDX走势">
        <path d="M12.500 1583V1452.500H1067V1583" fill="none" stroke="#2a2a2a" stroke-width="2"></path>
        <path d="M12 1523.500H1067" stroke="#5fb0b0" stroke-width="1.400" stroke-dasharray="1 1"></path>
        <path d="M12 1522.500H1067" stroke="#8c2a2a" stroke-dasharray="1 11"></path>
        <g fill="#808080" font-size="37"><text x="15" y="1493">27.72</text><text x="15" y="1582">-23.86</text></g>
        <g transform="translate(0 1190) ${FINE}">
          <path class="line crisp" d=${stem(true)} stroke="#b03030" stroke-width="1"></path>
          <path class="line crisp" d=${stem(false)} stroke="#5fb0b0" stroke-width="1"></path>
          <polyline class="line" points=${DDX_FAST} stroke="#ffef1a" stroke-width="2.800"></polyline>
          <polyline class="line" points=${DDX_MID} stroke="#f516e6" stroke-width="2.800"></polyline>
          <polyline class="line" points=${DDX_SLOW} stroke="#3fc83f" stroke-width="2.800"></polyline>
        </g>
      </svg>
    </div>`;
  }

  private renderDay() {
    return html`<section class="day">
        <div class="day-head">
          <h2>2024/09/02</h2>
          <a class="replay" href="#replay">
            <svg width="49" height="50" viewBox="0 0 49 50" fill="none" stroke="currentColor" stroke-width="4.500" aria-hidden="true">
              <path d="M3.500 25A21.500 22 0 1 0 9 10.500M3 3V16H15"></path><path d="M3 15.500L10 9.500"></path><path d="M25.500 11V25.500H36"></path>
            </svg>
            <span>超级复盘</span>${this.chevron(18, 32, true, 3)}
          </a>
        </div>
        <dl>${DAY.map((d) => html`<div><dt>${d.label}</dt><dd class=${d.tone}>${d.value}</dd></div>`)}</dl>
      </section>
      <div class="chart">
        <svg viewBox="0 1751 1080 340" role="img" aria-label="分时走势">
          <rect x="12" y="1751" width="247" height="338" fill="#10171f"></rect>
          <path d="M12.500 1752H1067V2089H12.500Z" fill="none" stroke="#2c2c2c" stroke-width="2"></path>
          <text x="337" y="1961" font-size="103" font-weight="900" fill="#161616">东方财富</text>
          <g stroke="#363636" stroke-dasharray="1.500 1.500">
            <path d="M12 1836.500H1067M12 2004.500H1067M138 1752V2089M259 1752V2089M461.500 1752V2089M663.500 1752V2089M865.500 1752V2089"></path>
          </g>
          <path d="M12 1920.500H1067" stroke="#8c8c8c" stroke-width="2" stroke-dasharray="10 10"></path>
          <g transform="translate(0 1590) ${FINE}">
            <polyline class="line" points=${AVERAGE} stroke="#f4e95c" stroke-width="2"></polyline>
            <polyline class="line" points=${PRE_OPEN} stroke="#e6e6e6" stroke-width="5"></polyline>
            <polyline class="line" points=${INTRADAY} stroke="#ebebeb" stroke-width="3"></polyline>
          </g>
          <g font-size="40">
            <text x="12" y="1794" fill="#e80c0c">4.68</text>
            <text x="12" y="1936" fill="#6e6e6e" opacity="0.900">4.25</text>
            <text x="12" y="2079" fill="#18d018">3.82</text>
          </g>
          <g font-size="38" text-anchor="end">
            <text x="1068" y="1794" fill="#e80c0c">10.12%</text>
            <text x="1068" y="2079" fill="#18d018">-10.12%</text>
          </g>
        </svg>
      </div>
      <div class="legend sub">${this.pick("成交额", "small")}${this.readings([{ text: "4.39亿", dir: "", tone: "white" }], "ddx")}</div>
      <div class="chart">
        <svg viewBox="0 2151 1080 81" role="img" aria-label="分时成交额">
          <rect x="12" y="2152" width="247" height="78" fill="#10171f"></rect>
          <path d="M12 2152.500H1067.500V2230.500H12Z" fill="none" stroke="#2c2c2c" stroke-width="1.500"></path>
          <g stroke="#363636" stroke-dasharray="1.500 1.500"><path d="M138 2152V2230M259 2152V2230M461.500 2152V2230M663.500 2152V2230M865.500 2152V2230"></path></g>
          <g transform="translate(0 2080) scale(0.68871 0.33333)">${runs(VOLUME, 450)}${runs(UNMATCHED, 216, true)}</g>
          <text x="262" y="2183" font-size="28" fill="#757575">3543.3万</text>
        </svg>
      </div>
      <div class="times"><span>09:15</span><span>09:30</span><span>15:00</span></div>`;
  }

  render() {
    return html`
      ${this.renderStatus()} ${this.renderHeader()}
      ${this.banner
        ? html`<div class="banner">
            <a href="#permission">一键开通科创成长层权限！把握打新、交易机会</a>
            <button aria-label="关闭提示" @click=${() => (this.banner = false)}>
              <svg width="33" height="34" viewBox="0 0 33 34" stroke="#2f72bf" stroke-width="3" stroke-linecap="round" aria-hidden="true"><path d="M2 2L31 32M31 2L2 32"></path></svg>
            </button>
          </div>`
        : nothing}
      <section class="quote">
        <div>
          <p class="last">4.68</p>
          <p class="change red"><span>10.12%</span><span>0.43</span></p>
        </div>
        <dl class="stats">
          ${STATS.map((s) => html`<div class="stat"><dt>${s.label}</dt><dd class=${s.tone}>${s.value}</dd></div>`)}
        </dl>
        <p class="date">2024/09/02</p>
        <button class="more">更多</button>
      </section>
      <nav class="tabs">
        ${TABS.map((t) => html`<button class="tab ${this.tab === t ? "on" : ""}" @click=${() => (this.tab = t)}>${t}</button>`)}
        <button class="tab">更多<svg width="16" height="13" viewBox="0 0 16 13" aria-hidden="true"><path d="M0 0H16L8 13Z" fill="#8e8d92"></path></svg></button>
        <button class="gear" aria-label="设置">
          <svg width="52" height="52" viewBox="0 0 52 52" fill="none" stroke="#8e8d92" stroke-width="4" aria-hidden="true">
            <path d="M21.500 2.500H30.500L32 9.500Q35 10.500 37.500 12.500L44.500 10L49 18L44 23Q44.500 26 44 29L49 34L44.500 42L37.500 39.500Q35 41.500 32 42.500L30.500 49.500H21.500L20 42.500Q17 41.500 14.500 39.500L7.500 42L3 34L8 29Q7.500 26 8 23L3 18L7.500 10L14.500 12.500Q17 10.500 20 9.500Z"></path>
            <circle cx="26" cy="26" r="8.500"></circle>
          </svg>
        </button>
      </nav>
      <div class="legend">
        ${this.pick("均线", "tight")} ${this.readings(MA, "ma")}
        <div class="tools"><button class="tool dk">DK点</button><button class="tool">前复权</button></div>
      </div>
      <div class="plots">
        ${this.renderKline()}
        <div class="legend amount">
          ${this.pick("成交额")} ${this.readings(TURNOVER, "turn")}
          <button class="fold" aria-label="展开">${this.chevron(17, 29, false, 4)}</button>
        </div>
        ${this.renderTurnover()}
        <div class="legend">${this.pick("DDX", "loose")} ${this.readings(DDX, "ddx")}</div>
        ${this.renderDdx()}
        <div class="cross"></div>
      </div>
      ${this.renderDay()}
      <footer class="foot">
        <button>${this.chevron(18, 32, false, 3)}前一天</button>
        <button>后一天${this.chevron(18, 32, true, 3)}</button>
        <button class="close">关闭</button>
        <div class="home"></div>
      </footer>
    `;
  }
}
